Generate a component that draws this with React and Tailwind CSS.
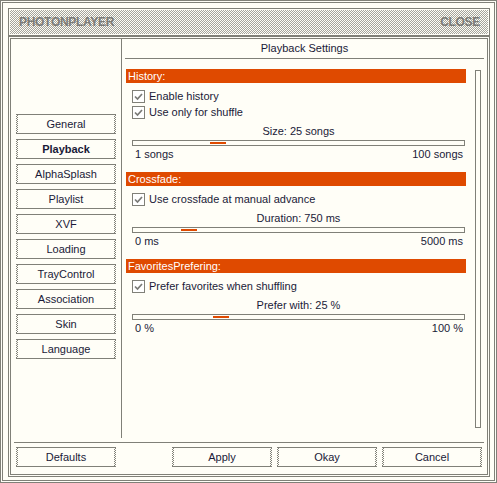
const sections = [
  {
    title: "History:",
    checks: ["Enable history", "Use only for shuffle"],
    label: "Size: 25 songs",
    min: "1 songs",
    max: "100 songs",
    thumb: "ml-[77px]",
  },
  {
    title: "Crossfade:",
    checks: ["Use crossfade at manual advance"],
    label: "Duration: 750 ms",
    min: "0 ms",
    max: "5000 ms",
    thumb: "ml-[48px]",
  },
  {
    title: "FavoritesPrefering:",
    checks: ["Prefer favorites when shuffling"],
    label: "Prefer with: 25 %",
    min: "0 %",
    max: "100 %",
    thumb: "ml-[80px]",
  },
];

const menu = [
  "General",
  "Playback",
  "AlphaSplash",
  "Playlist",
  "XVF",
  "Loading",
  "TrayControl",
  "Association",
  "Skin",
  "Language",
];

// 1px checker used for the dotted button edges and the title bar
const dots =
  "bg-[image:conic-gradient(#808078_0_25%,transparent_0_50%,#808078_0_75%,transparent_0)] bg-[length:2px_2px]";
const titleDots =
  "bg-[image:conic-gradient(#a4a49c_0_25%,transparent_0_50%,#a4a49c_0_75%,transparent_0)] bg-[length:2px_2px]";

const FlatButton = ({ text, bold }) => (
  <div className="flex h-[20px] w-[100px] items-stretch border-y border-[#808078]">
    <span className={`w-[2px] ${dots}`} />
    <span
      className={`flex flex-1 items-center justify-center ${
        bold ? "font-bold" : ""
      }`}
    >
      {text}
    </span>
    <span className={`w-[2px] ${dots}`} />
  </div>
);

const CheckBox = ({ text }) => (
  <div className="flex h-[16px] items-center gap-[4px] pl-[6px]">
    <span className="flex h-[13px] w-[13px] items-center justify-center border border-[#808078] bg-white">
      <svg width="11" height="11" viewBox="0 0 11 11">
        <polyline
          points="2,5.5 4.5,8 9,3"
          fill="none"
          stroke="#7a7a76"
          strokeWidth="1.7"
        />
      </svg>
    </span>
    <span>{text}</span>
  </div>
);

const Section = ({ s, first }) => (
  <div className={first ? "" : "mt-[10px]"}>
    <div className="h-[14px] bg-[#df4a00] pl-[2px] leading-[14px] text-white">
      {s.title}
    </div>
    <div className="mt-[5px]">
      {s.checks.map((c) => (
        <CheckBox key={c} text={c} />
      ))}
    </div>
    <div className="mt-[3px] flex h-[16px] items-center justify-center pl-[6px] pr-[1px]">
      {s.label}
    </div>
    <div className="ml-[6px] mr-[1px] mt-px flex h-[6px] items-center border border-[#808078]">
      <span className={`h-[2px] w-[16px] bg-[#df4a00] ${s.thumb}`} />
    </div>
    <div className="flex h-[16px] items-center justify-between pl-[9px] pr-[3px]">
      <span>{s.min}</span>
      <span>{s.max}</span>
    </div>
  </div>
);

const App = () => {
  return (
    <div className="h-[483px] w-[497px] border border-[#808078] bg-[#fffef7] p-px font-['Liberation_Sans',Arial,sans-serif] text-[11px] text-[#1a1a38]">
      <div className="flex h-full flex-col border border-[#808078] pb-[3px] pl-[5px] pr-[4px] pt-[5px]">
        <div className="flex h-[28px] border border-[#808078] p-px">
          <div
            className={`flex flex-1 items-center justify-between pl-[9px] pr-[8px] text-[12px] font-bold tracking-[-0.3px] text-[#7c7c78] ${titleDots}`}
          >
            <span>PHOTONPLAYER</span>
            <span>CLOSE</span>
          </div>
        </div>

        <div className="flex flex-1 border border-[#808078] p-px">
          <div className="flex flex-1 flex-col border border-[#808078]">
            <div className="flex flex-1">
              <div className="flex w-[111px] flex-col gap-[5px] border-r border-[#808078] px-[5px] pt-[75px]">
                {menu.map((m) => (
                  <FlatButton key={m} text={m} bold={m === "Playback"} />
                ))}
              </div>

              <div className="flex flex-1 flex-col">
                <div className="mx-[3px] flex h-[20px] items-center justify-center border-b border-[#808078]">
                  Playback Settings
                </div>
                <div className="flex pl-[4px]">
                  <div className="w-[340px] pt-[10px]">
                    {sections.map((s, i) => (
                      <Section key={s.title} s={s} first={i === 0} />
                    ))}
                  </div>
                  <div className="ml-[9px] mt-[11px] h-[358px] w-[6px] border border-[#808078]" />
                </div>
              </div>
            </div>

            <div className="mx-[3px] mt-[4px] border-t border-[#808078]" />

            <div className="mt-[4px] flex px-[5px] pb-[7px]">
              <FlatButton text="Defaults" />
              <div className="ml-auto flex gap-[5px]">
                <FlatButton text="Apply" />
                <FlatButton text="Okay" />
                <FlatButton text="Cancel" />
              </div>
            </div>
          </div>
        </div>
      </div>
    </div>
  );
};

export default App;
